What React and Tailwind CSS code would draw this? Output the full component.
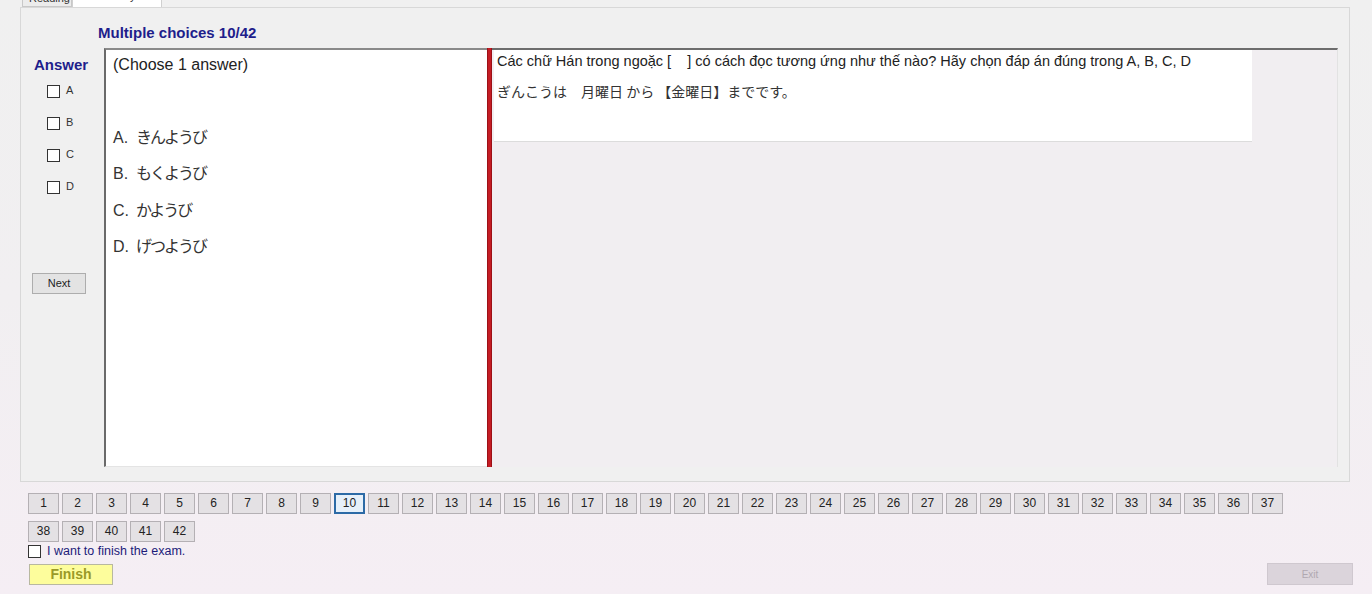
import React from "react"

const options = [
  { key: "A", text: "きんようび" },
  { key: "B", text: "もくようび" },
  { key: "C", text: "かようび" },
  { key: "D", text: "げつようび" },
]

function Box({ className = "" }) {
  return <span className={"inline-block w-[13px] h-[13px] border border-[#333] bg-white " + className} />
}

export default function App() {
  const nums = Array.from({ length: 42 }, (_, i) => i + 1)

  return (
    <div
      className="w-[1372px] h-[594px] overflow-hidden bg-gradient-to-b from-[#f0f0f0] via-[#f1eff1] to-[#f5eef4] text-[#222] font-['Liberation_Sans',Arial,'Noto_Sans_CJK_JP',sans-serif]"
    >
      {/* tab strip */}
      <div className="h-[7px] flex items-end pl-[22px] overflow-hidden">
        <div className="h-[20px] w-[50px] border border-[#c8c8c8] bg-[#ececec] text-[11px] leading-[20px] px-[6px] text-[#333]">Reading</div>
        <div className="h-[24px] w-[90px] border border-[#d0d0d0] border-b-0 bg-white text-[11px] leading-[24px] px-[8px] text-[#333]">Vocabulary</div>
      </div>

      {/* tab panel */}
      <div className="ml-[20px] w-[1330px] h-[475px] border border-[#d8d8d8] bg-[#f0f0f0] pt-[16px]">
        <div className="pl-[77px] h-[24px] text-[15px] font-bold leading-[18px] text-[#1e1e8c]">Multiple choices 10/42</div>

        <div className="flex h-[419px]">
          {/* answer column */}
          <div className="w-[83px] pt-[8px] flex flex-col">
            <div className="pl-[13px] text-[15px] font-bold leading-[18px] text-[#1e1e8c]">Answer</div>
            <div className="mt-[11px] flex flex-col gap-[19px] pl-[26px]">
              {options.map((o) => (
                <div key={o.key} className="flex items-start h-[13px] gap-[6px]">
                  <Box />
                  <span className="text-[11px] leading-[11px] text-[#333]">{o.key}</span>
                </div>
              ))}
            </div>
            <button className="mt-[79px] ml-[11px] w-[54px] h-[21px] bg-[#e3e3e3] border border-[#adadad] text-[11px] text-[#222]">Next</button>
          </div>

          {/* options panel */}
          <div className="w-[383px] bg-white border-l-2 border-t-2 border-b border-l-[#6a6a6a] border-t-[#8a8a8a] border-b-[#e4e4e4] pl-[7px] pt-[5px]">
            <div className="text-[16px] leading-[20px] text-[#222]">(Choose 1 answer)</div>
            <div className="mt-[43px] flex flex-col">
              {options.map((o) => (
                <div key={o.key} className="h-[36.3px] leading-[36px] text-[16px] text-[#333] flex items-baseline">
                  <span className="w-[23px]">{o.key}.</span>
                  <span className="font-['Noto_Sans_CJK_JP',sans-serif] tracking-[-2px] text-[#333]">{o.text}</span>
                </div>
              ))}
            </div>
          </div>

          {/* divider */}
          <div className="w-[5px] bg-[#c41c24] border-x border-[#9c1016]" />

          {/* question panel */}
          <div className="w-[846px] border-t-2 border-[#6d6d6d] border-r border-r-[#e2e2e2] bg-[#f1eef1] pl-[2px]">
            <div className="w-[758px] h-[92px] bg-white border-b border-[#dcdcdc] pl-[3px] pt-[2px] text-[14.5px] text-[#222]">
              <div className="leading-[18px]">Các chữ Hán trong ngoặc [&nbsp;&nbsp;&nbsp;&nbsp;] có cách đọc tương ứng như thế nào? Hãy chọn đáp án đúng trong A, B, C, D</div>
              <div className="mt-[11px] leading-[20px] text-[14px] font-['Noto_Sans_CJK_JP',sans-serif] text-[#333]">ぎんこうは　月曜日 から 【金曜日】までです。</div>
            </div>
          </div>
        </div>
      </div>

      {/* question numbers */}
      <div className="mt-[11px] ml-[28px] w-[1260px] flex flex-wrap gap-x-[3px] gap-y-[7px]">
        {nums.map((n) =>
          n === 10 ? (
            <div key={n} className="w-[31px] h-[21px] border-2 border-[#2c6aa6] bg-[#e6f0fa] text-[12px] leading-[17px] text-center text-[#222]">{n}</div>
          ) : (
            <div key={n} className="w-[31px] h-[21px] border border-[#b4b0b4] bg-[#e4e1e4] text-[12px] leading-[19px] text-center text-[#222]">{n}</div>
          )
        )}
      </div>

      <div className="mt-[3px] ml-[28px] flex items-center gap-[6px] h-[13px]">
        <Box className="w-[12px] h-[12px]" />
        <span className="text-[12.5px] leading-[13px] text-[#1c1c7a]">I want to finish the exam.</span>
      </div>

      <div className="mt-[6px] flex justify-between items-start">
        <button className="ml-[29px] w-[84px] h-[21px] bg-[#fdfd9c] border border-[#b8b8a0] text-[14px] font-bold text-[#9a9a28] leading-[19px]">Finish</button>
        <button className="mr-[19px] -mt-[1px] w-[86px] h-[22px] bg-[#dbd4db] border border-[#cfc8cf] text-[10px] text-[#b0a8b0]">Exit</button>
      </div>
    </div>
  )
}
